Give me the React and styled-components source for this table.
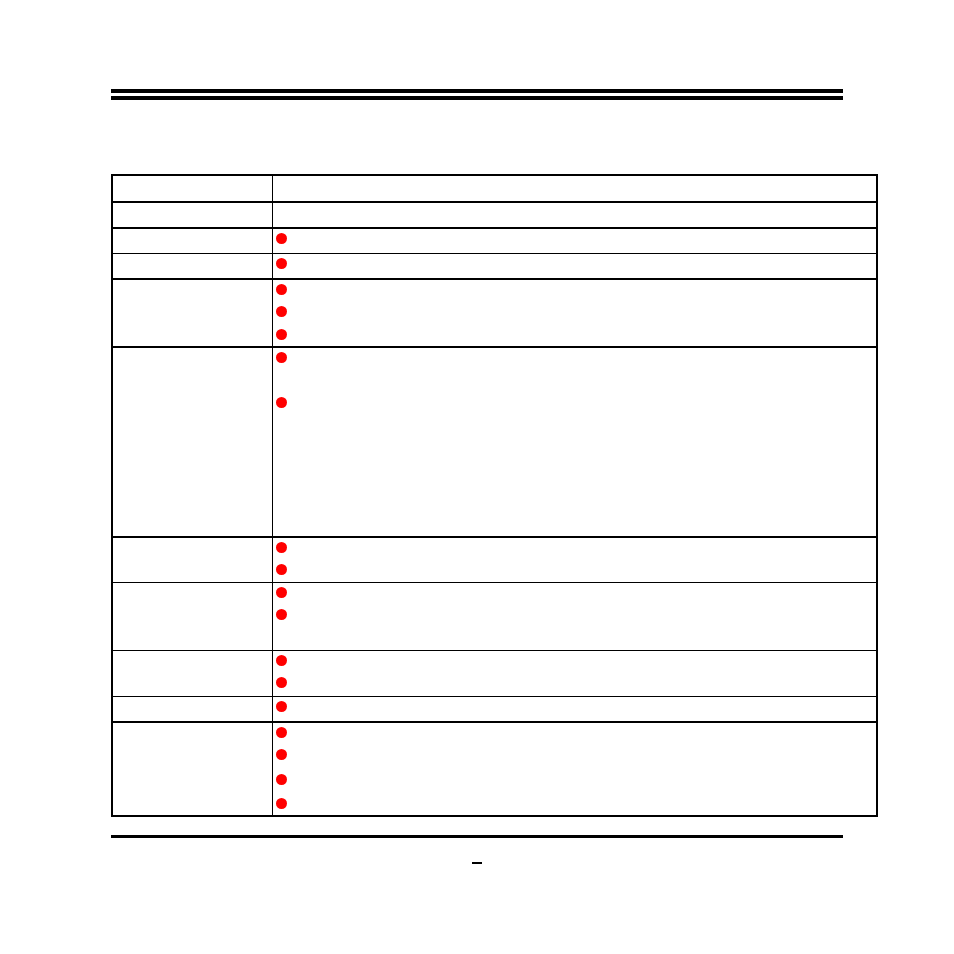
import styled, {createGlobalStyle} from "styled-components";

const GlobalStyle = createGlobalStyle`
    html, body {
        margin: 0;
        padding: 0;
        background: #ffffff;
        font-family: "Liberation Sans", Arial, sans-serif;
    }
`

const Page = styled.div`
    width: 954px;
    height: 954px;
    box-sizing: border-box;
    padding: 89px 0 0 111px;
    display: flex;
    flex-direction: column;
`

const HeaderRules = styled.div`
    width: 732px;
    display: flex;
    flex-direction: column;
    gap: 3px;
`

const Rule = styled.div`
    height: ${props => props.thick}px;
    background: #000000;
`

const Table = styled.div`
    margin-top: 74px;
    width: 767px;
    box-sizing: border-box;
    border: 2px solid #000000;
    display: flex;
    flex-direction: column;
`

const Row = styled.div`
    display: grid;
    grid-template-columns: 159px 1fr;
    grid-template-rows: 100%;
    height: ${props => props.h}px;
    overflow: hidden;
    border-top: ${props => props.border}px solid #000000;
`

const LabelCell = styled.div``

const ValueCell = styled.div`
    border-left: 1px solid #000000;
    padding: 4px 0 0 3px;
    display: flex;
    flex-direction: column;
`

const BulletLine = styled.div`
    height: ${props => props.h}px;
    flex-shrink: 0;
    display: flex;
    align-items: flex-start;
    font-size: 14px;
`

const Dot = styled.span`
    width: 11px;
    height: 11px;
    border-radius: 50%;
    background: #ff0000;
    flex-shrink: 0;
`

const FooterRule = styled.div`
    margin-top: 18px;
    width: 732px;
    height: 3px;
    background: #000000;
`

const PageMark = styled.div`
    margin: 24px 0 0 361px;
    width: 10px;
    height: 2px;
    background: #000000;
`

const rows = [
    {h: 25, border: 0, lines: []},
    {h: 24, border: 2, lines: []},
    {h: 24, border: 2, lines: [20]},
    {h: 24, border: 1, lines: [20]},
    {h: 66, border: 2, lines: [22, 23, 17]},
    {h: 188, border: 2, lines: [45, 22]},
    {h: 44, border: 2, lines: [22, 18]},
    {h: 67, border: 1, lines: [22, 22]},
    {h: 45, border: 1, lines: [22, 19]},
    {h: 24, border: 1, lines: [20]},
    {h: 92, border: 2, lines: [22, 25, 24, 17]},
]

export default function App() {
    return (
        <>
            <GlobalStyle/>
            <Page>
                <HeaderRules>
                    <Rule thick={4}/>
                    <Rule thick={4}/>
                </HeaderRules>
                <Table>
                    {rows.map((row, i) => (
                        <Row key={i} h={row.h} border={row.border}>
                            <LabelCell/>
                            <ValueCell>
                                {row.lines.map((lineHeight, j) => (
                                    <BulletLine key={j} h={lineHeight}>
                                        <Dot/>
                                    </BulletLine>
                                ))}
                            </ValueCell>
                        </Row>
                    ))}
                </Table>
                <FooterRule/>
                <PageMark/>
            </Page>
        </>
    )
}
